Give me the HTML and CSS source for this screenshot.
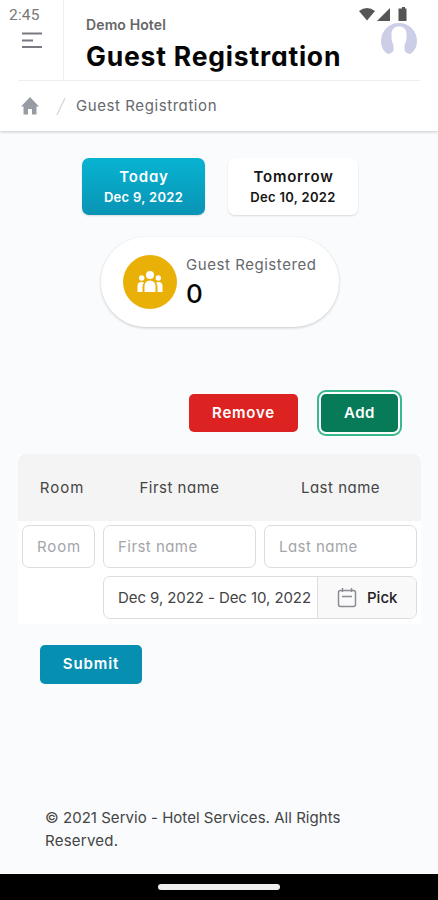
FILE: index.html
```html
<!DOCTYPE html>
<html lang="en">
<head>
<meta charset="utf-8">
<title>Guest Registration</title>
<link rel="stylesheet" href="styles.css">
</head>
<body>
<div class="status">
  <span class="clock">2:45</span>
  <svg class="status-icons" width="50" height="16" viewBox="0 0 50 16" fill="#555"><path d="M0 4Q8-2 16 4L8 13.500Z"/><path d="M31 1V14H18Z"/><path d="M41.500 1.500h1.500V0h3v1.500h1.500V14h-8V1.500z"/></svg>
</div>
<header class="header">
  <div class="topbar">
    <div class="menu"><svg width="20" height="17" viewBox="0 0 20 17" stroke="#777a80" stroke-width="2.200"><path d="M0 1.500H20M0 8.500H11M0 15H20"/></svg></div>
    <div class="titles"><p class="hotel">Demo Hotel</p><h1 class="title">Guest Registration</h1></div>
    <svg class="avatar" width="36" height="33" viewBox="0 0 36 33"><path d="M7 31C3 29 0 24 0 18A18 18 0 0 1 36 18C36 24 33 29 29 31C26 30.500 24 29 23.500 27V22C25.500 19 25.500 15 25.500 11C25.500 6 22.500 3.500 18 3.500S10.500 6 10.500 11C10.500 15 10.500 19 12.500 22V27C12 29 10 30.500 7 31Z" fill="#cbcee6"/></svg>
  </div>
  <nav class="crumbs">
    <svg width="18" height="18" viewBox="0 0 18 18" fill="#989ba3"><path d="M9 0 18 9.500H15.500V17.500H11V12H7V17.500H2.500V9.500H0Z"/></svg>
    <svg class="slash" width="10" height="19" viewBox="0 0 10 19" stroke="#d5d7db" stroke-width="1.300"><path d="M9 1 1 18"/></svg>
    <span class="crumb">Guest Registration</span>
  </nav>
</header>
<main class="main">
  <div class="days">
    <button class="day active"><b class="day-name">Today</b><span class="date">Dec 9, 2022</span></button>
    <button class="day"><b class="day-name">Tomorrow</b><span class="date">Dec 10, 2022</span></button>
  </div>
  <section class="stat">
    <div class="badge"><svg width="26" height="22" viewBox="0 0 26 22" fill="#fff"><circle cx="13" cy="4" r="4"/><circle cx="4.700" cy="7" r="2.700"/><circle cx="21.300" cy="7" r="2.700"/><path d="M7.500 21V15a5.500 5.500 0 0 1 11 0V21ZM.5 21V15Q.5 11 4.500 11L7 11.500Q5.500 13 5.500 16V21ZM25.500 21V15Q25.500 11 21.500 11L19 11.500Q20.500 13 20.500 16V21Z"/></svg></div>
    <div><div class="stat-label">Guest Registered</div><div class="stat-value">0</div></div>
  </section>
  <div class="actions"><button class="btn remove">Remove</button><button class="btn add">Add</button></div>
  <section class="table">
    <div class="row head"><span>Room</span><span>First name</span><span>Last name</span></div>
    <div class="row fields"><div class="field">Room</div><div class="field">First name</div><div class="field">Last name</div>
      <div class="range"><span class="range-text">Dec 9, 2022 - Dec 10, 2022</span><button class="pick"><svg width="20" height="20" viewBox="0 0 20 20" fill="none" stroke="#8b8d92" stroke-width="1.500"><rect x="1.500" y="2.500" width="17" height="16" rx="2"/><path d="M5.500 0V4M14.500 0V4M5 8.500H15"/></svg><span>Pick</span></button></div>
    </div>
  </section>
  <button class="btn submit">Submit</button>
  <footer class="footer">© 2021 Servio - Hotel Services. All Rights<br><span class="last">Reserved.</span></footer>
</main>
<div class="navbar"><div class="handle"></div></div>
</body>
</html>
```
FILE: styles.css
```css
* { box-sizing: border-box; }
body { margin: 0; width: 438px; height: 900px; overflow: hidden; display: flex; flex-direction: column; background: #f9fbfd; font-family: Inter, sans-serif; font-feature-settings: "cv11"; font-size: 15px; color: #444; }
button { font: inherit; font-feature-settings: inherit; border: 0; padding: 0; color: inherit; }
p, h1 { margin: 0; }
.status { position: absolute; top: 0; left: 0; width: 438px; height: 28px; padding: 6px 29px 0 9px; display: flex; justify-content: space-between; }
.clock { font: 15.5px/18px Roboto, sans-serif; color: #777; letter-spacing: 0.2px; }
.status-icons { margin-top: 1px; }
.header { height: 131px; flex: none; padding: 0 18px; background: #fff; box-shadow: 0 1px 3px #0003; }
.topbar { height: 81px; display: flex; border-bottom: 1px solid #eee; }
.menu { width: 46px; border-right: 1px solid #eee; padding: 32px 0 0 4px; }
.titles { flex: 1; padding: 16px 0 0 22px; white-space: nowrap; }
.hotel { font-size: 14px; line-height: 18px; font-weight: 600; color: #666; letter-spacing: 0.12px; }
.title { margin-top: 4px; font-size: 26.5px; line-height: 36px; font-weight: 700; color: #050505; letter-spacing: 0.8px; }
.avatar { margin: 23px 3px 0 0; }
.crumbs { height: 50px; display: flex; align-items: center; padding-left: 3px; }
.slash { margin: 0 10px 0 17px; }
.crumb { color: #66686d; letter-spacing: 0.58px; margin-top: -1px; }
.main { flex: 1; padding: 27px 18px 0; }
.days { display: flex; gap: 23px; margin-left: 64px; }
.day { width: 123px; height: 57px; border-radius: 7px; background: #fff; color: #151515; display: flex; flex-direction: column; align-items: center; justify-content: center; box-shadow: 0 1px 2px #0002; line-height: 20px; }
.day + .day { width: 130px; }
.day.active { background: linear-gradient(#07b3d1, #0a94b5); color: #fff; }
.day-name { font-weight: 600; letter-spacing: 0.8px; margin-right: -1px; }
.date { font-size: 13px; font-weight: 600; letter-spacing: 0.3px; }
.stat { width: 238px; height: 90px; margin: 22px 0 0 83px; border-radius: 45px; background: #fff; box-shadow: 0 1px 3px #0003; display: flex; padding-left: 22px; gap: 9px; align-items: center; }
.badge { width: 54px; height: 54px; border-radius: 50%; background: #e9b008; display: flex; align-items: center; justify-content: center; }
.stat-label { line-height: 22px; color: #66686d; letter-spacing: 0.55px; }
.stat-value { font-size: 26px; line-height: 35px; font-weight: 500; color: #050505; }
.actions { display: flex; justify-content: flex-end; gap: 23px; margin: 67px 22px 0 0; }
.btn { height: 38px; border-radius: 5px; font-weight: 600; color: #fff; padding-bottom: 2px; letter-spacing: 0.5px; }
.remove { width: 109px; background: #dd2222; letter-spacing: 0.8px; }
.add { width: 77px; background: #077a57; box-shadow: 0 0 0 2px #fff, 0 0 0 4px #37b98b; }
.table { width: 403px; height: 170px; margin-top: 22px; background: #fff; }
.row { display: grid; grid-template-columns: 73px 153px 153px; column-gap: 8px; padding: 0 4px; }
.head { height: 67px; background: #f4f4f4; border-radius: 7px 7px 0 0; align-items: center; letter-spacing: 0.5px; }
.head span { text-align: center; }
.head span:first-child { padding-left: 7px; letter-spacing: 1px; }
.fields { padding-top: 4px; row-gap: 8px; }
.field { height: 43px; border: 1px solid #ddd; border-radius: 7px; padding-left: 14px; line-height: 41px; color: #a3a5aa; letter-spacing: 0.45px; white-space: nowrap; }
.field:first-child { letter-spacing: 0.9px; }
.range { grid-column: 2 / 4; height: 43px; border: 1px solid #ddd; border-radius: 7px; display: flex; overflow: hidden; }
.range-text { width: 213px; padding-left: 14px; line-height: 41px; white-space: nowrap; letter-spacing: -0.08px; }
.pick { flex: 1; background: #f9f9fa; border-left: 1px solid #ddd; display: flex; align-items: center; gap: 10px; padding-left: 19px; font-weight: 500; color: #222; }
.submit { display: block; width: 102px; height: 39px; margin: 21px 0 0 22px; background: #078fb2; letter-spacing: 0.9px; }
.footer { margin: 122px 0 0 27px; line-height: 23px; white-space: nowrap; letter-spacing: 0.03px; }
.last { letter-spacing: 0.25px; }
.navbar { height: 26px; flex: none; background: #000; display: flex; justify-content: center; padding-top: 10px; }
.handle { width: 122px; height: 6px; border-radius: 3px; background: #eee; }
```
